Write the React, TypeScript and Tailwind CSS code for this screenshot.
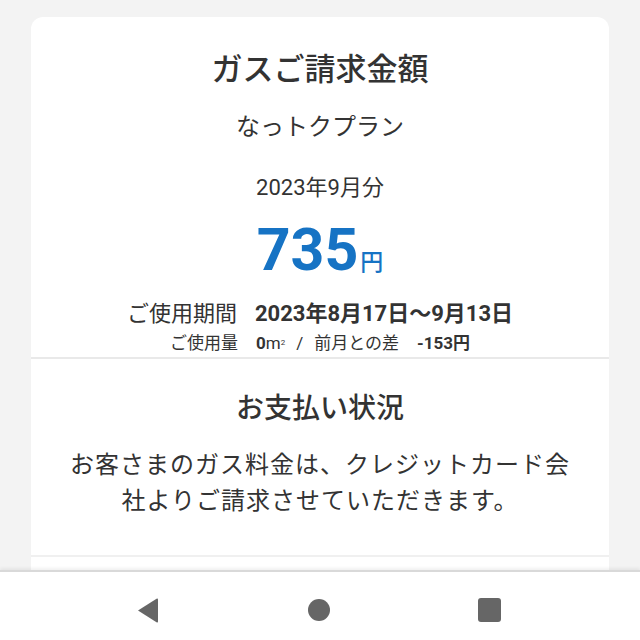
const NavBar = () => (
  <nav className="relative h-[70px] shrink-0 bg-white border-t-2 border-[#d9d9d9] shadow-[0_-2px_3px_rgba(0,0,0,0.06)] flex items-center justify-between pl-[137px] pr-[139px] pt-[8px]">
    {/* back */}
    <svg width="22" height="25" viewBox="0 0 22 25" aria-hidden>
      <path d="M21 1.5 L21 23.5 Q21 25 19.5 24.2 L1 12.5 L19.5 0.8 Q21 0 21 1.5 Z" fill="#666666" />
    </svg>
    {/* home */}
    <span className="block w-[22px] h-[22px] rounded-full bg-[#666666]" />
    {/* recents */}
    <span className="block w-[23px] h-[24px] rounded-[3px] bg-[#666666]" />
  </nav>
);

export default function App() {
  return (
    <div className="w-[640px] h-[640px] flex flex-col bg-[#f3f3f3] text-[#333333] font-[Roboto,'Noto_Sans_CJK_JP',sans-serif] overflow-hidden">
      <main className="flex-1 overflow-hidden px-[31px] pt-[17px]">
        <div className="bg-white rounded-t-[12px] h-full">
          {/* 請求金額 */}
          <section className="flex flex-col items-center pt-[31px] pb-px border-b-2 border-[#e9e9e9]">
            <h1 className="text-[31px] leading-[44px] font-medium">ガスご請求金額</h1>
            <p className="mt-[18px] text-[24px] leading-[34px]">なっトクプラン</p>
            <p className="mt-[28px] text-[22px] leading-[32px]">2023年9月分</p>
            <p className="mt-[16px] leading-none text-[#1673c4] font-bold">
              <span className="text-[59px]">735</span>
              <span className="ml-[2px] text-[23px] font-medium">円</span>
            </p>
            <p className="mt-[20px] text-[22px] leading-[30px] flex gap-[18px]">
              <span>ご使用期間</span>
              <span className="font-bold">2023年8月17日～9月13日</span>
            </p>
            <p className="mt-px text-[17px] leading-[26px] flex items-baseline">
              <span>ご使用量</span>
              <span className="ml-[18px] font-bold">
                0<span className="font-normal">m</span>
                <span className="font-normal text-[8px] align-top">2</span>
              </span>
              <span className="mx-[11px]">/</span>
              <span>前月との差</span>
              <span className="ml-[18px] font-bold">-153円</span>
            </p>
          </section>

          {/* お支払い状況 */}
          <section className="flex flex-col items-center pt-[30px] pb-[36px] px-[36px] border-b-2 border-[#f0f0f0]">
            <h2 className="text-[28px] leading-[40px] font-medium">お支払い状況</h2>
            <p className="mt-[18px] text-[24px] leading-[36px] tracking-[1px] text-center">
              お客さまのガス料金は、クレジットカード会社よりご請求させていただきます。
            </p>
          </section>
        </div>
      </main>
      <NavBar />
    </div>
  );
}
